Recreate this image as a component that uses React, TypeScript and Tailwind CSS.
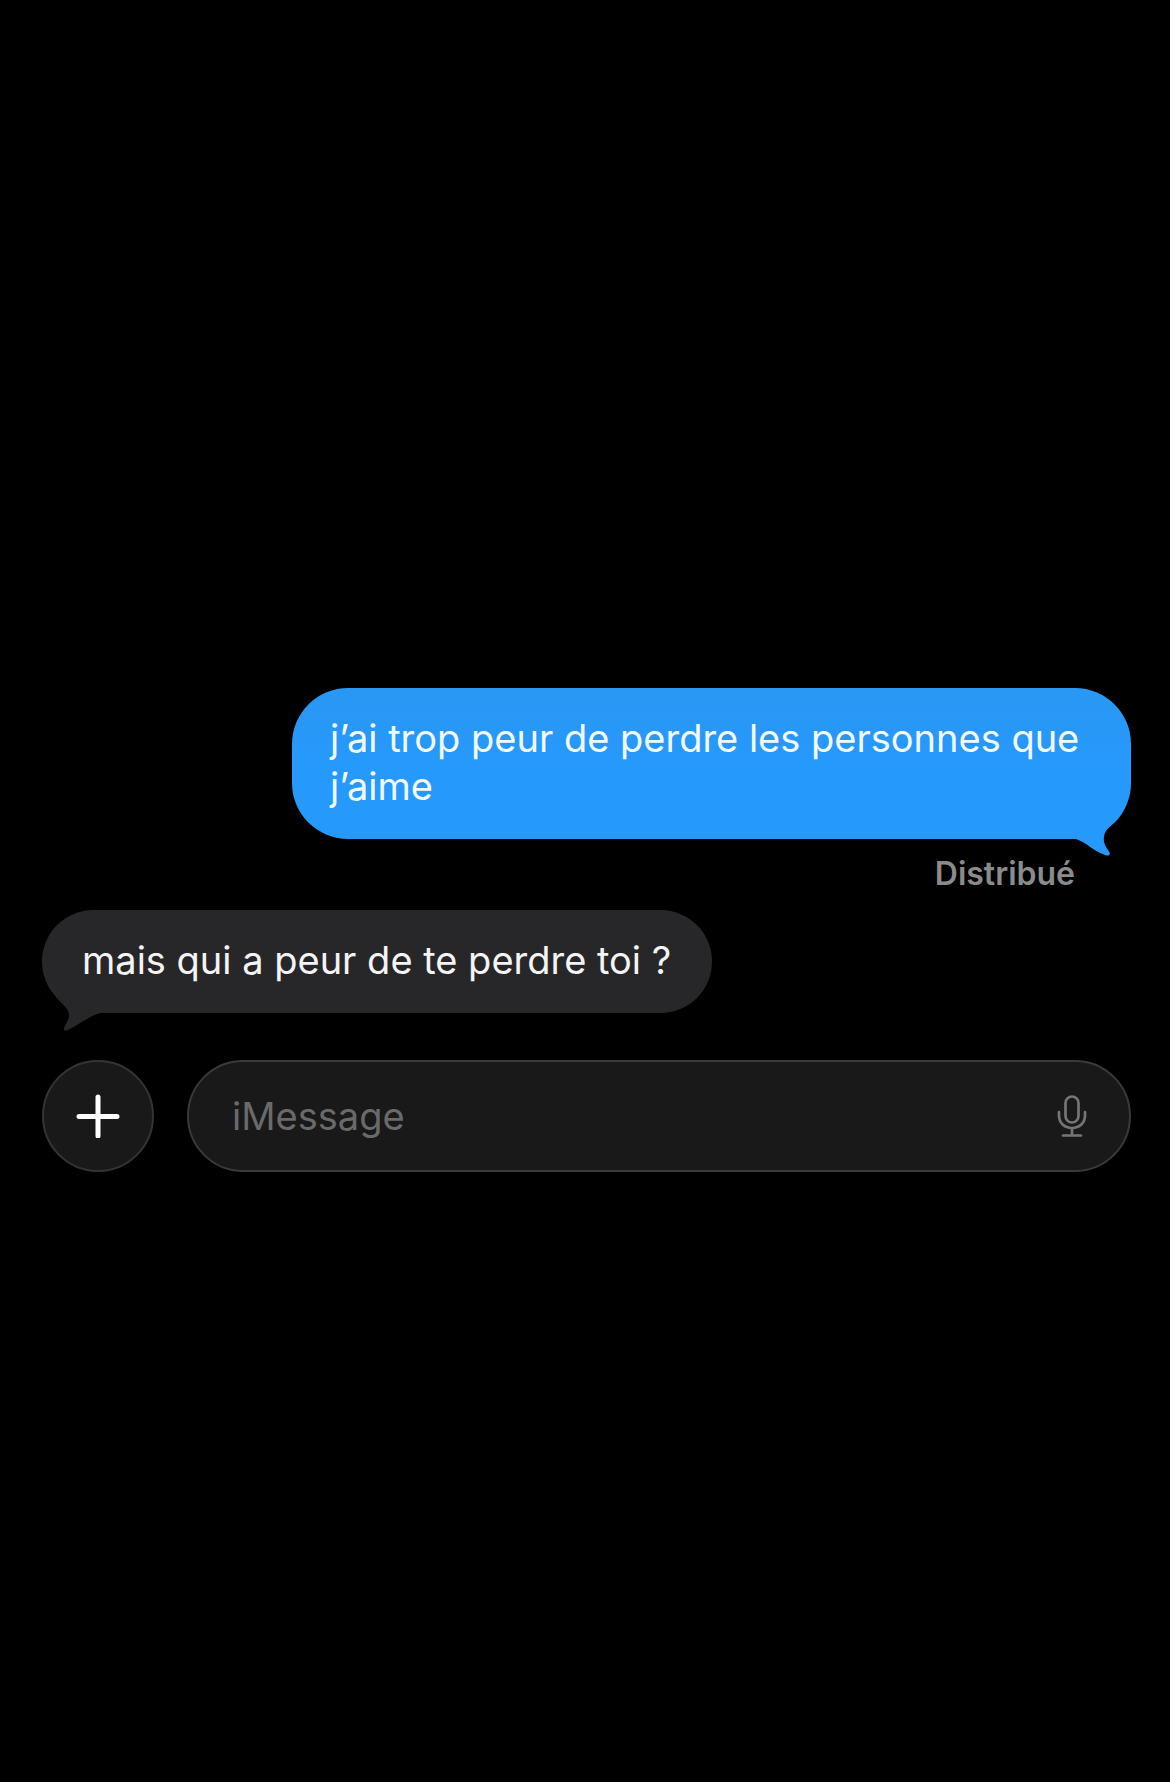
import React from "react";

function SentTail() {
  return (
    <svg
      aria-hidden="true"
      viewBox="0 0 56 50"
      className="absolute right-0 -bottom-[19px] h-[50px] w-[56px]"
      fill="#2699fc"
    >
      <path d="M45 8C39 16 30 20 29 29C28 35 31 39 34 43.500C36 46.500 34 48.500 30 47C18 43 11 34 1 31V4Z" />
    </svg>
  );
}

function ReceivedTail() {
  return (
    <svg
      aria-hidden="true"
      viewBox="0 0 60 50"
      className="absolute left-0 -bottom-[19px] h-[50px] w-[60px]"
      fill="#272729"
    >
      <path d="M14 15C20 23 26 25 27 32C27.500 37 24 41 22 46C21.500 48.500 23 49.500 26 48C37 43 48 33 59 31V4Z" />
    </svg>
  );
}

function MicIcon() {
  return (
    <svg
      aria-hidden="true"
      viewBox="0 0 30 44"
      className="h-[44px] w-[30px]"
      fill="none"
      stroke="#757575"
      strokeWidth="2.7"
      strokeLinecap="round"
    >
      <rect x="8.500" y="2.500" width="13" height="26" rx="6.500" />
      <path d="M2 18V21.500C2 29 7.500 34 15 34S28 29 28 21.500V18M15 34V41.500M6 41.500H24" />
    </svg>
  );
}

export default function App() {
  return (
    <main className="flex min-h-screen flex-col justify-center bg-black pt-[78px] pr-[39px] pl-[42px] font-['Inter',sans-serif] text-[38px] leading-[48px]">
      <section aria-label="Conversation" className="flex flex-col">
        <div className="relative max-w-[839px] self-end rounded-[56px] bg-linear-to-b from-[#2a97f3] to-[#2699fc] to-50% pt-[26px] pr-[38px] pb-[29px] pl-[38px] text-[#f1faff]">
          <SentTail />
          <p className="relative">j’ai trop peur de perdre les personnes que j’aime</p>
        </div>
        <p className="mt-[17px] mr-[56px] self-end text-[32px] leading-[36px] font-semibold text-[#8b8b8b]">
          Distribué
        </p>
        <div className="relative mt-[18px] self-start rounded-[52px] bg-[#272729] pt-[26px] pr-[41px] pb-[29px] pl-[40px] text-[#f4f4f4]">
          <ReceivedTail />
          <p className="relative">mais qui a peur de te perdre toi ?</p>
        </div>
      </section>
      <form className="mt-[47px] flex items-center gap-[33px]" onSubmit={(e) => e.preventDefault()}>
        <button
          type="button"
          aria-label="Ajouter"
          className="flex size-[112px] shrink-0 items-center justify-center rounded-full border-2 border-[#343434] bg-[#191919]"
        >
          <svg viewBox="0 0 44 44" className="size-[44px]" stroke="#ffffff" strokeWidth="5" strokeLinecap="round">
            <path d="M22 3V42M3 22.500H41" />
          </svg>
        </button>
        <div className="flex h-[112px] min-w-0 flex-1 items-center rounded-full border-2 border-[#3a3a3a] bg-[#191919] pr-[42px] pl-[43px]">
          <input
            type="text"
            aria-label="iMessage"
            placeholder="iMessage"
            className="min-w-0 flex-1 bg-transparent text-[#f4f4f4] outline-none placeholder:text-[#6a6a6a]"
          />
          <button type="button" aria-label="Dicter" className="shrink-0">
            <MicIcon />
          </button>
        </div>
      </form>
    </main>
  );
}
